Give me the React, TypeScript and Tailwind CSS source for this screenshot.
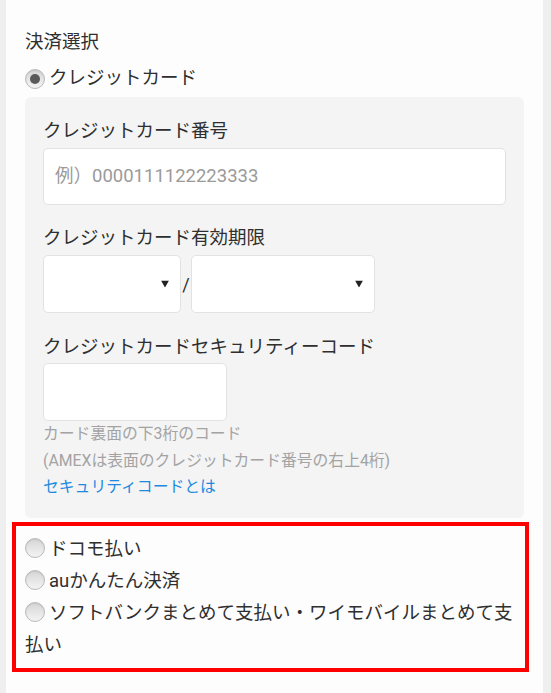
import React from 'react';

const font = { fontFamily: "Roboto, 'Noto Sans CJK JP', sans-serif" };

const Radio: React.FC<{ checked?: boolean }> = ({ checked }) => (
  <span className="inline-flex items-center justify-center w-[20px] h-[20px] rounded-full border border-[#b9b9b9] bg-gradient-to-b from-[#d6d6d6] to-[#f4f4f4] align-[-3px] mr-[4px] shadow-[inset_0_1px_1px_rgba(0,0,0,0.08)]">
    {checked && <span className="w-[10px] h-[10px] rounded-full bg-[#5a5a5a]" />}
  </span>
);

const Arrow = () => (
  <svg width="8" height="7" viewBox="0 0 8 7" className="absolute right-[11px] top-1/2 -translate-y-1/2">
    <path d="M0 0 H8 L4 7 Z" fill="#222" />
  </svg>
);

export default function App() {
  return (
    <div className="min-h-screen bg-[#efefef]" style={font}>
      <div className="ml-[6px] w-[537px] min-h-[693px] bg-[#fdfdfd] px-[19px] pt-[27px] text-[#2f2f2f]">
        <h2 className="text-[18.5px] leading-[30px] font-normal">決済選択</h2>

        <div className="mt-[7px] h-[30px] flex items-center text-[18.5px]">
          <Radio checked />
          <span>クレジットカード</span>
        </div>

        <div className="mt-[3px] bg-[#f4f4f4] rounded-[6px] px-[18px] pt-[19px] pb-[17px]">
          <div className="text-[18.5px] leading-[30px]">クレジットカード番号</div>
          <div className="mt-[2px] h-[57px] bg-white border border-[#e2e2e2] rounded-[5px] flex items-center px-[11px] text-[18.5px] text-[#9a9a9a]">
            例）0000111122223333
          </div>

          <div className="mt-[18px] text-[18.5px] leading-[30px]">クレジットカード有効期限</div>
          <div className="mt-[2px] flex items-center">
            <div className="relative w-[138px] h-[58px] bg-white border border-[#e2e2e2] rounded-[5px]">
              <Arrow />
            </div>
            <span className="w-[10px] text-center text-[18px]">/</span>
            <div className="relative w-[184px] h-[58px] bg-white border border-[#e2e2e2] rounded-[5px]">
              <Arrow />
            </div>
          </div>

          <div className="mt-[19px] text-[18.5px] leading-[30px]">クレジットカードセキュリティーコード</div>
          <div className="mt-[1px] w-[184px] h-[58px] bg-white border border-[#e2e2e2] rounded-[5px]" />
          <div className="text-[15.8px] leading-[26.5px] text-[#a3a3a3]">
            <div>カード裏面の下3桁のコード</div>
            <div>(AMEXは表面のクレジットカード番号の右上4桁)</div>
            <div className="text-[#1d8ae0]">セキュリティコードとは</div>
          </div>
        </div>

        <div className="mt-[4px] -ml-[13px] -mr-[5px] border-[4px] border-[#ff0000] pl-[9px] pr-[4px] pt-[7px] pb-[7px] text-[18.5px] leading-[32px]">
          <div>
            <Radio />ドコモ払い
          </div>
          <div>
            <Radio />auかんたん決済
          </div>
          <div>
            <Radio />ソフトバンクまとめて支払い・ワイモバイルまとめて支払い
          </div>
        </div>
      </div>
    </div>
  );
}
